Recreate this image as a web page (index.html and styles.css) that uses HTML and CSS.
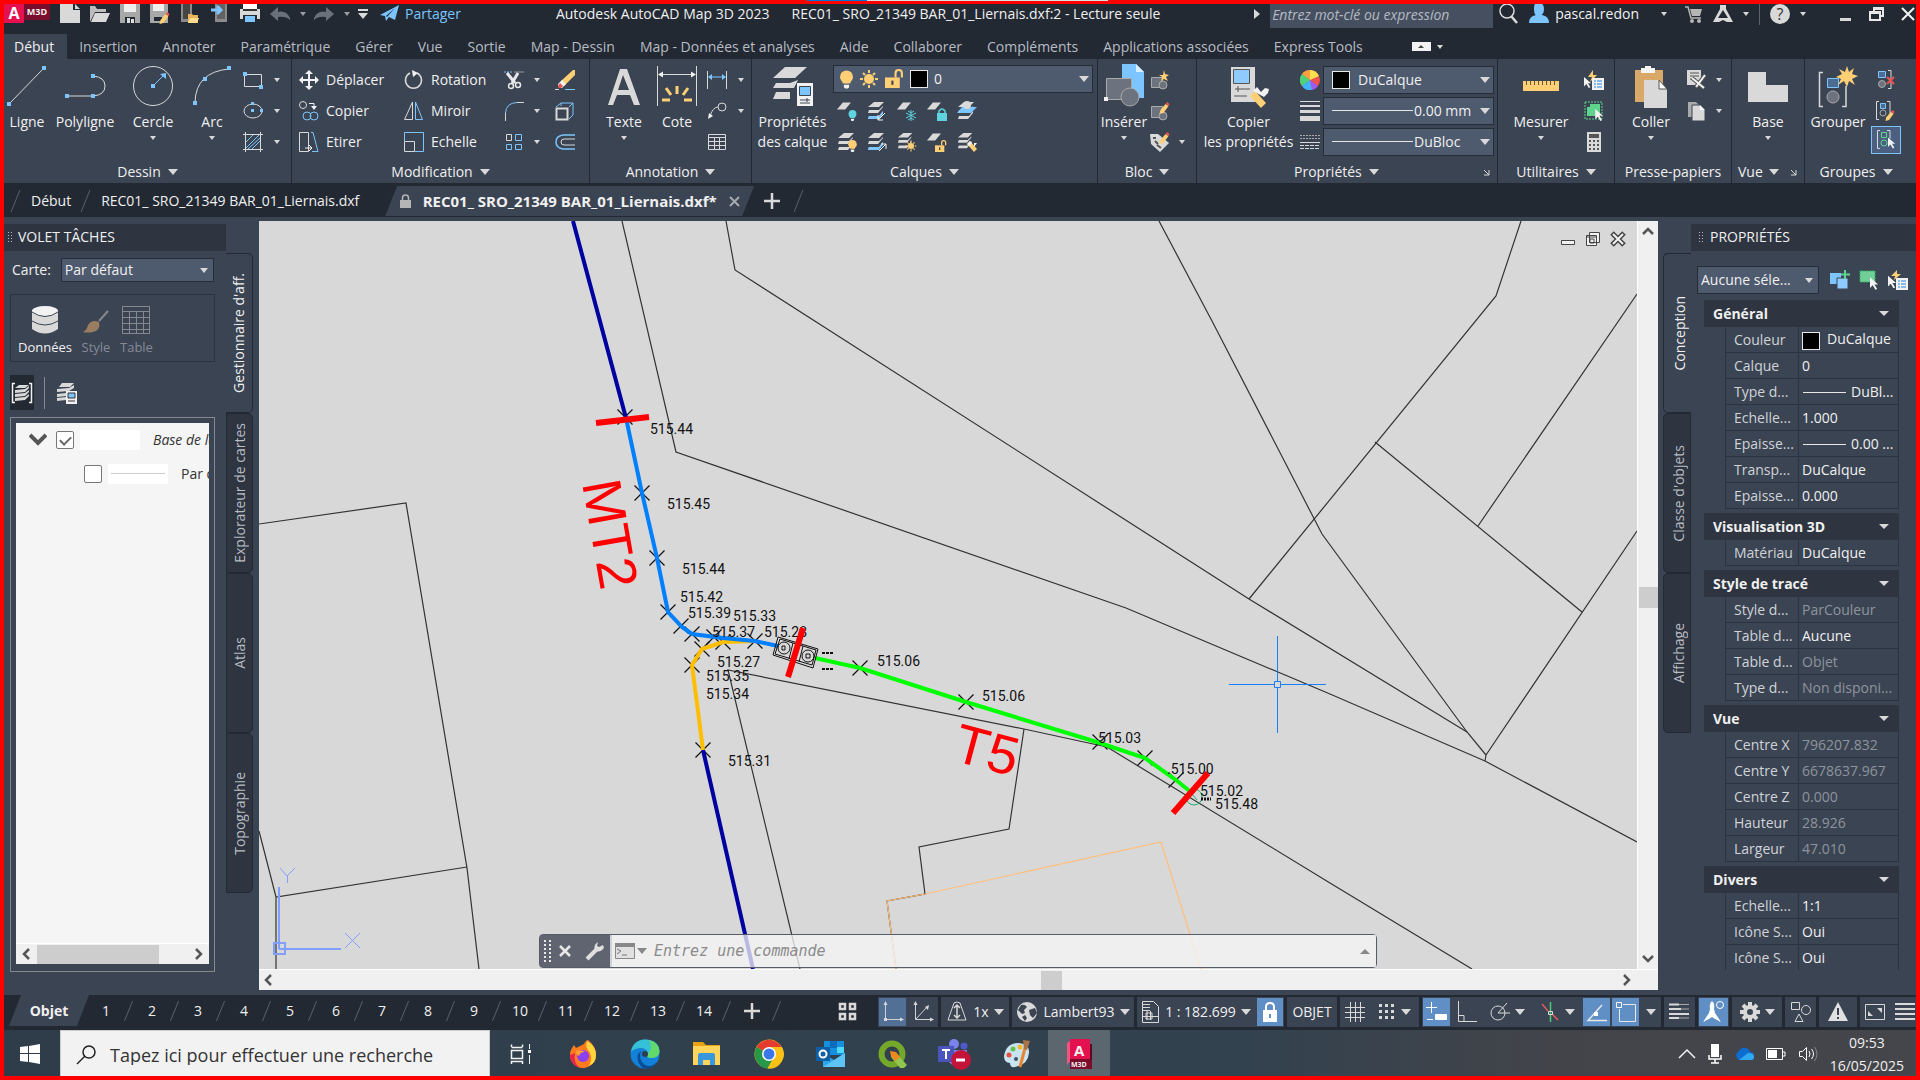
FILE: index.html
```html
<!DOCTYPE html>
<html lang="fr">
<head>
<meta charset="utf-8">
<title>Autodesk AutoCAD Map 3D 2023</title>
<link rel="stylesheet" href="styles.css">
</head>
<body>
<svg class="defs" aria-hidden="true">
  <symbol id="sheet" viewBox="0 0 12 6"><path d="M5 0h7L7 6H0z" fill="#d9d9d9"/></symbol>
  <symbol id="stack" viewBox="0 0 20 20"><path d="M7 1h10l-5 5H1z" fill="#d9d9d9"/><path d="M2 9h10l4-4v1l-5 6H1z" fill="#d9d9d9"/><path d="M2 15h10l4-5v2l-5 6H1z" fill="#d9d9d9"/></symbol>
  <symbol id="bulb" viewBox="0 0 10 14"><circle cx="5" cy="5" r="5"/><path d="M2 8h6v2H2z"/><path d="M3 11h4v2l-1 1H4l-1-1z" fill="#f2f2f2"/></symbol>
  <symbol id="sun" viewBox="0 0 20 20"><circle cx="10" cy="10" r="5"/><path d="M10 1v3M10 16v3M1 10h3M16 10h3M4 4l2 2M14 14l2 2M16 4l-2 2M4 16l2-2" stroke="#ffcf75" stroke-width="2"/></symbol>
  <symbol id="unlock" viewBox="0 0 18 18"><path d="M0 8h14v10H0z"/><path d="M10 8V4q0-3 3-3t3 3v4" fill="none" stroke="#ffcf75" stroke-width="2"/><path d="M7 11v4" stroke="#3b4453" stroke-width="2"/></symbol>
  <symbol id="pencil" viewBox="0 0 10 12"><path d="M0 12l1-4 5-6 3 2-5 7z" fill="#ffcf75"/><path d="M6 2l2-2 2 2-1 2z" fill="#e8554d"/></symbol>
  <symbol id="cursor" viewBox="0 0 10 14"><path d="M0 0l9 8H5l3 5-2 1-3-5-3 3z" fill="#f2f2f2"/></symbol>
  <symbol id="mark" viewBox="-8 -8 16 16"><path d="M-7.500-7.500l15 15M7.500-7.500l-15 15" stroke="#111" stroke-width="1.200"/></symbol>
</svg>

<div class="app">
  <header class="titlebar">
    <button class="brand" aria-label="Menu application"><b>A</b><span>M3D</span></button>
    <div class="quick">
      <button aria-label="Nouveau"><svg width="20" height="20"><path d="M0 0h13v6h7v13H0z" fill="#d9d9d9"/><path d="M15 0l5 5h-5z" fill="#d9d9d9"/></svg></button>
      <button aria-label="Ouvrir"><svg width="20" height="20"><path d="M0 18V2h5l2 3h9v3H5z" fill="#bdbdbd"/><path d="M5 9h15l-4 9H1z" fill="#d9d9d9"/></svg></button>
      <button aria-label="Enregistrer"><svg width="20" height="20"><path d="M0 0h20v19H0z" fill="#a8a8a8"/><path d="M4 0h12v8H4z" fill="#eee"/><path d="M5 13h10v6H5z" fill="#222933"/><path d="M7 14h3v5H7zM11 15h3v4h-3z" fill="#ddd"/></svg></button>
      <button aria-label="Enregistrer sous"><svg width="20" height="20"><path d="M0 0h18v19H0z" fill="#a8a8a8"/><path d="M3 0h11v7H3z" fill="#eee"/><path d="M4 13h8v4H4z" fill="#222933"/><use href="#pencil" x="9" y="8" width="11" height="12"/></svg></button>
      <button aria-label="Ouvrir depuis mobile"><svg width="20" height="20"><path d="M1 0h11v18H1z" fill="#8b8b8b"/><path d="M3 0h7v15H3z" fill="#454545"/><path d="M8 10h4l1 1h5v8H8z" fill="#e9b559"/><path d="M10 14h9l-2 5H8z" fill="#ffdc8c"/></svg></button>
      <button aria-label="Enregistrer sur mobile"><svg width="20" height="20"><path d="M5 0h12v18H5z" fill="#8b8b8b"/><path d="M7 0h8v15H7z" fill="#626262"/><path d="M1 6h8M7 2l4 4-4 4" fill="none" stroke="#7cc5ff" stroke-width="3"/></svg></button>
      <button aria-label="Imprimer"><svg width="20" height="20"><path d="M3 0h14v5H3z" fill="#fff"/><path d="M0 5h20v10H0z" fill="#d9d9d9"/><path d="M3 5h14v2H3z" fill="#333"/><path d="M3 11h14v8H3z" fill="#222933"/><path d="M5 12h10v6H5z" fill="#7cc5ff"/></svg></button>
      <button aria-label="Annuler"><svg width="20" height="20"><path d="M8 3v5q8-2 12 6v2q-4-4-12-3v4L0 10z" fill="#6b717b"/></svg></button><i class="caret dim"></i>
      <button aria-label="Rétablir"><svg width="20" height="20"><path d="M12 3v5Q4 6 0 14v2q4-4 12-3v4l8-7z" fill="#6b717b"/></svg></button><i class="caret dim"></i>
      <button aria-label="Personnaliser" class="slim"><svg width="10" height="20"><path d="M0 5h10v2H0zM0 9h10l-5 6z" fill="#d9d9d9"/></svg></button>
      <button class="share"><svg width="20" height="20"><path d="M0 11L19 1l-4 15-6-3-3 4-1-5zM6 12l9-8-8 9z" fill="#7cc5ff" fill-rule="evenodd"/></svg>Partager</button>
    </div>
    <h1><span>Autodesk AutoCAD Map 3D 2023</span><span>REC01_ SRO_21349 BAR_01_Liernais.dxf:2 - Lecture seule</span></h1>
    <div class="account">
      <i class="play"></i>
      <input type="text" aria-label="Recherche" placeholder="Entrez mot-clé ou expression">
      <button aria-label="Rechercher"><svg width="20" height="22"><circle cx="8" cy="8" r="7" fill="none" stroke="#d9d9d9" stroke-width="1.500"/><path d="M12 13l6 7" stroke="#d9d9d9" stroke-width="2.500"/></svg></button>
      <button class="user"><svg width="20" height="22"><path d="M10 0q5 0 5 6t-5 7-5-7 5-6" fill="#7cc5ff"/><path d="M0 20q0-7 7-8h6q7 1 7 8z" fill="#7cc5ff"/></svg>pascal.redon</button>
      <i class="caret"></i>
      <button aria-label="Boutique"><svg width="18" height="20"><path d="M0 3h3l3 11h10" fill="none" stroke="#b5b5b5" stroke-width="1.500"/><path d="M5 5h12l-2 7H7z" fill="#b5b5b5"/><circle cx="7" cy="17" r="2" fill="#b5b5b5"/><circle cx="14" cy="17" r="2" fill="#b5b5b5"/></svg></button>
      <button aria-label="Autodesk"><svg width="20" height="20"><path d="M7 1h6v4l7 13h-6l-4-2-4 2H0L7 5zM10 6l-5 8h10z" fill="#d9d9d9" fill-rule="evenodd"/></svg></button>
      <i class="caret"></i>
      <i class="bar"></i>
      <button aria-label="Aide" class="help">?</button>
      <i class="caret"></i>
    </div>
    <div class="winctl">
      <button aria-label="Réduire"><svg width="16" height="16"><path d="M2 12h11v3H2z" fill="#d9d9d9"/></svg></button>
      <button aria-label="Restaurer"><svg width="16" height="16"><path d="M5 5V2h9v8h-3M1 6h10v8H1zM1 7h10M5 3h9" fill="none" stroke="#e8e8e8" stroke-width="2"/></svg></button>
      <button aria-label="Fermer"><svg width="16" height="16"><path d="M2 2l12 12M14 2L2 14" stroke="#f2f2f2" stroke-width="2"/></svg></button>
    </div>
  </header>

  <nav class="menu">
    <button class="on">Début</button><button>Insertion</button><button>Annoter</button><button>Paramétrique</button><button>Gérer</button><button>Vue</button><button>Sortie</button><button>Map - Dessin</button><button>Map - Données et analyses</button><button>Aide</button><button>Collaborer</button><button>Compléments</button><button>Applications associées</button><button>Express Tools</button>
    <button class="collapse" aria-label="Réduire le ruban"><svg width="19" height="9"><path d="M0 0h19v9H0z" fill="#f2f2f2"/><path d="M6 6l3-3 3 3z" fill="#444"/></svg><i class="caret"></i></button>
  </nav>

  <section class="ribbon">
    <div class="panel p-draw">
      <div class="tools">
        <button class="big"><svg width="40" height="44"><path d="M2 40L37 4" stroke="#d9d9d9"/><path d="M0 38h4v4H0zM35 2h4v4h-4z" fill="#7cc5ff"/></svg>Ligne</button>
        <button class="big poly"><svg width="44" height="44"><path d="M4 32h26q12-1 12-10T30 12" fill="none" stroke="#d9d9d9"/><path d="M2 30h4v4H2zM28 30h4v4h-4zM28 10h4v4h-4z" fill="#7cc5ff"/></svg>Polyligne</button>
        <button class="big"><svg width="42" height="44"><circle cx="21" cy="22" r="19.500" fill="none" stroke="#d9d9d9"/><path d="M21 22l12-12" stroke="#7cc5ff"/><path d="M34 9v6l-6-5zM19 20h4v4h-4z" fill="#7cc5ff"/></svg>Cercle<i class="caret"></i></button>
        <button class="big arc"><svg width="40" height="44"><path d="M3 38Q4 8 37 5" fill="none" stroke="#d9d9d9"/><path d="M1 37h4v4H1zM11 13h4v4h-4zM35 2h4v4h-4z" fill="#7cc5ff"/></svg>Arc<i class="caret"></i></button>
        <div class="small">
          <button aria-label="Rectangle"><svg width="20" height="20"><path d="M1.500 4.500h17v12h-17z" fill="none" stroke="#d9d9d9"/><path d="M0 2h4v4H0zM16 15h4v4h-4z" fill="#7cc5ff"/></svg><i class="caret"></i></button>
          <button aria-label="Ellipse"><svg width="20" height="20"><ellipse cx="10" cy="10" rx="9" ry="7" fill="none" stroke="#d9d9d9"/><path d="M8 8h3v3H8zM17 8h3v3h-3zM8 1h3v3H8z" fill="#7cc5ff"/></svg><i class="caret"></i></button>
          <button aria-label="Hachures"><svg width="20" height="20"><path d="M0 2.500h20M0 17.500h20M2.500 0v20M17.500 0v20" stroke="#d9d9d9"/><path d="M3 10l7-7M3 16L16 3M9 17l8-8M5 17l12-11" stroke="#7cc5ff"/></svg><i class="caret"></i></button>
        </div>
      </div>
      <h2>Dessin <i class="caret"></i></h2>
    </div>
    <div class="panel p-edit">
      <div class="tools editgrid">
        <button><svg width="20" height="20"><path d="M10 2v16M2 10h16" stroke="#f2f2f2" stroke-width="2"/><path d="M10 0l4 4H6zM10 20l4-4H6zM0 10l4-4v8zM20 10l-4-4v8z" fill="#f2f2f2"/></svg>Déplacer</button>
        <button><svg width="20" height="20"><path d="M13 3a8 8 0 1 1-7 0" fill="none" stroke="#d9d9d9" stroke-width="1.500"/><path d="M8 0l6 3-5 4z" fill="#f2f2f2"/></svg>Rotation</button>
        <button class="ico" aria-label="Ajuster"><svg width="20" height="20"><path d="M0 2h9" stroke="#7cc5ff" stroke-dasharray="2 1"/><path d="M10 2h10" stroke="#999"/><path d="M3 3l8 10M14 3L8 13" stroke="#e8e8e8" stroke-width="3"/><circle cx="7" cy="16" r="2.500" fill="none" stroke="#e8e8e8" stroke-width="1.500"/><circle cx="14" cy="15" r="2.500" fill="none" stroke="#e8e8e8" stroke-width="1.500"/></svg><i class="caret"></i></button>
        <button class="ico" aria-label="Effacer"><svg width="20" height="20"><path d="M6 11L18 0h2v5L9 16z" fill="#ffcf75"/><path d="M7 10l4 4-4 4H4l-1-4z" fill="#f2f2f2"/><path d="M5 13l3 3-2 2H4l-1-2z" fill="#e8554d"/><path d="M0 19.500h4" stroke="#d9d9d9"/><path d="M10 19.500h10" stroke="#7cc5ff"/></svg></button>
        <button><svg width="20" height="20"><circle cx="4" cy="4" r="3.500" fill="none" stroke="#d9d9d9"/><path d="M10 2.500h5v4" fill="none" stroke="#f2f2f2"/><path d="M12 5h6l-3 4z" fill="#f2f2f2"/><circle cx="8" cy="15" r="4" fill="none" stroke="#7cc5ff"/><circle cx="15" cy="15" r="4" fill="none" stroke="#7cc5ff"/></svg>Copier</button>
        <button><svg width="20" height="20"><path d="M8.500 1v17.500h-8z" fill="none" stroke="#d9d9d9"/><path d="M11.500 1v17.500h7z" fill="none" stroke="#7cc5ff"/></svg>Miroir</button>
        <button class="ico" aria-label="Raccord"><svg width="20" height="20"><path d="M1.500 20v-8" stroke="#d9d9d9"/><path d="M1.500 12Q2 2 13 1.500" fill="none" stroke="#7cc5ff"/><path d="M13 1.500h7" stroke="#d9d9d9"/></svg><i class="caret"></i></button>
        <button class="ico" aria-label="Décomposer"><svg width="20" height="20"><path d="M1.500 7.500h11v11h-11z" fill="none" stroke="#d9d9d9" stroke-width="2"/><path d="M1 6l5-4h12v12l-4 4M14 6l4-4M6 2v3" fill="none" stroke="#7cc5ff"/></svg></button>
        <button><svg width="20" height="20"><path d="M.5.5h9v19h-9z" fill="none" stroke="#d9d9d9"/><path d="M12 .5h2l5 19h-6" fill="none" stroke="#7cc5ff"/><path d="M6 16h7M10 13l3 3-3 3" fill="none" stroke="#f2f2f2"/></svg>Etirer</button>
        <button><svg width="20" height="20"><path d="M.5 9V.5h19v19H11" fill="none" stroke="#7cc5ff"/><path d="M.5 9.500h10v10H.5z" fill="none" stroke="#d9d9d9"/></svg>Echelle</button>
        <button class="ico" aria-label="Réseau"><svg width="20" height="20" fill="none"><path d="M2.500 2.500h5v6h-5z" stroke="#d9d9d9"/><path d="M11.500 2.500h6v6h-6zM2.500 12.500h5v5h-5zM11.500 12.500h6v5h-6z" stroke="#7cc5ff"/></svg><i class="caret"></i></button>
        <button class="ico" aria-label="Décaler"><svg width="20" height="20" fill="none"><path d="M20 3H8Q1 4 1 10t7 7h12" stroke="#7cc5ff" stroke-width="1.500"/><path d="M20 7H9q-3 0-3 3t3 3h11" stroke="#d9d9d9"/></svg></button>
      </div>
      <h2>Modification <i class="caret"></i></h2>
    </div>
    <div class="panel p-note">
      <div class="tools">
        <button class="big"><svg width="34" height="44"><path d="M13 5h7l13 36h-6l-4-10H10L6 41H1zM16 11l-5 15h11z" fill="#d9d9d9" fill-rule="evenodd"/></svg>Texte<i class="caret"></i></button>
        <button class="big"><svg width="42" height="44"><path d="M1.500 2v40M40.500 2v40M3 10.500h36" stroke="#d9d9d9"/><path d="M2 10.500l5-3v6zM40 10.500l-5-3v6z" fill="#f2f2f2"/><path d="M21 22v8M10 24l5 7M32 24l-5 7M6 36h8M28 36h8" stroke="#ffcf75" stroke-width="3"/></svg>Cote</button>
        <div class="small">
          <button aria-label="Linéaire"><svg width="20" height="20"><path d="M.5 1v18M19.500 1v18" stroke="#d9d9d9"/><path d="M2 7h16" stroke="#7cc5ff"/><path d="M1 7l4-3v6zM19 7l-4-3v6z" fill="#7cc5ff"/></svg><i class="caret"></i></button>
          <button aria-label="Repère"><svg width="20" height="20"><circle cx="15" cy="6" r="4" fill="none" stroke="#d9d9d9"/><path d="M11 6q-5 0-8 9" fill="none" stroke="#d9d9d9"/><path d="M1 18l1-6 4 3z" fill="#f2f2f2"/></svg><i class="caret"></i></button>
          <button aria-label="Table"><svg width="20" height="20"><path d="M1.500 2.500h17v15h-17zM1 5.500h18M1 9.500h18M1 13.500h18M7.500 6v12M12.500 6v12" fill="none" stroke="#d9d9d9"/></svg></button>
        </div>
      </div>
      <h2>Annotation <i class="caret"></i></h2>
    </div>
    <div class="panel p-layer">
      <div class="tools">
        <button class="big two"><svg width="40" height="44"><path d="M12 3h22L22 14H0zM3 19h14l8-3-4 8H0zM3 28h14v7H0z" fill="#d9d9d9"/><path d="M24 19h16v23H24z" fill="#f2f2f2"/><path d="M26.500 22.500h11v9h-11z" fill="#7cc5ff" stroke="#3b4453"/><path d="M27 36h10M27 39h10M34 34v4" stroke="#3b4453"/></svg>Propriétés<br>des calque</button>
        <div class="layers">
          <div class="combo"><svg width="13" height="20" fill="#ffcf75"><use href="#bulb" width="13" height="19" y="1"/></svg><svg width="20" height="20" fill="#ffcf75"><use href="#sun" width="20" height="20"/></svg><svg width="19" height="20" fill="#ffcf75"><use href="#unlock" width="19" height="19"/></svg><i class="swatch"></i><select aria-label="Calque"><option>0</option></select><i class="caret big-caret"></i></div>
          <div class="icons">
            <button aria-label="Calque inactif"><svg width="20" height="20"><use href="#sheet" width="14" height="8" y="1"/><use href="#bulb" x="11" y="9" width="9" height="11" fill="#5fd3e0"/></svg></button>
            <button aria-label="Isoler"><svg width="20" height="20"><use href="#stack" width="20" height="20"/><path d="M2 15h10l4-5v3l-4 5H1z" fill="#7cc5ff"/><path d="M11 19l7-7M11 14v5h5" fill="none" stroke="#f2f2f2"/></svg></button>
            <button aria-label="Geler"><svg width="20" height="20"><use href="#sheet" width="14" height="8" y="1"/><path d="M14 9v11M9 12l10 5M19 12L9 17M11 10l3 2 3-2M11 19l3-2 3 2" stroke="#5fd3e0" fill="none"/></svg></button>
            <button aria-label="Verrouiller"><svg width="20" height="20"><use href="#sheet" width="14" height="8" y="1"/><path d="M10 12h10v8H10z" fill="#5fd3e0"/><path d="M12 12v-2q3-4 6 0v2" fill="none" stroke="#5fd3e0" stroke-width="1.500"/></svg></button>
            <button aria-label="Rendre courant"><svg width="20" height="20"><use href="#stack" width="20" height="20"/><path d="M5 6h15l-6 6H0z" fill="#7cc5ff"/><circle cx="10" cy="4" r="4" fill="#d9d9d9"/></svg></button>
            <button aria-label="Activer tous"><svg width="20" height="20"><use href="#stack" width="20" height="20"/><use href="#bulb" x="11" y="8" width="9" height="12" fill="#ffcf75"/></svg></button>
            <button aria-label="Annuler isolement"><svg width="20" height="20"><use href="#stack" width="20" height="20"/><path d="M2 15h10l4-5v3l-4 5H1z" fill="#7cc5ff"/><path d="M12 19l7-7M14 12h5v5" fill="none" stroke="#f2f2f2"/></svg></button>
            <button aria-label="Libérer tous"><svg width="20" height="20" fill="#ffcf75"><use href="#stack" width="18" height="18"/><use href="#sun" x="8" y="8" width="12" height="12"/></svg></button>
            <button aria-label="Déverrouiller"><svg width="20" height="20" fill="#ffcf75"><use href="#sheet" width="14" height="8" y="1"/><use href="#unlock" x="8" y="8" width="12" height="12"/></svg></button>
            <button aria-label="Copier calque"><svg width="20" height="20"><use href="#stack" width="18" height="18"/><path d="M10 12l3-3 7 8-3 3z" fill="#ffcf75"/><path d="M10 12l3-3 2 2-3 3zM17 11l3 0-3 4z" fill="#f2f2f2"/></svg></button>
          </div>
        </div>
      </div>
      <h2>Calques <i class="caret"></i></h2>
    </div>
    <div class="panel p-block">
      <div class="tools">
        <button class="big"><svg width="40" height="44"><path d="M18 0h14l8 8v26H18z" fill="#7cc5ff"/><path d="M32 0v8h8z" fill="#d9efff"/><path d="M2.500 14.500h25v21h-25z" fill="#6c727e" stroke="#aaa"/><circle cx="26" cy="33" r="9" fill="#6c727e" stroke="#aaa"/><path d="M0 33h4v4H0z" fill="#f2f2f2"/></svg>Insérer<i class="caret"></i></button>
        <div class="small">
          <button aria-label="Créer un bloc"><svg width="20" height="20"><path d="M1.500 7.500h11v10h-11z" fill="#6c727e" stroke="#aaa"/><circle cx="13" cy="15" r="4" fill="#6c727e" stroke="#aaa"/><path d="M14 0l1 4 4 1-3 2 2 4-4-2-3 2 1-4-3-2h4z" fill="#ffcf75"/></svg></button>
          <button aria-label="Modifier un bloc"><svg width="20" height="20"><path d="M1.500 5.500h11v11h-11z" fill="#6c727e" stroke="#aaa"/><circle cx="13" cy="15" r="4" fill="#6c727e" stroke="#aaa"/><use href="#pencil" x="9" y="1" width="11" height="12"/></svg></button>
          <button aria-label="Attributs"><svg width="20" height="20"><path d="M0 2h8l11 9-9 9L1 12z" fill="#d9d9d9"/><path d="M3 6h3M5 9l3 3M7 13l4 3" stroke="#555" stroke-width="2"/><use href="#pencil" x="9" y="0" width="11" height="12"/></svg><i class="caret"></i></button>
        </div>
      </div>
      <h2>Bloc <i class="caret"></i></h2>
    </div>
    <div class="panel p-prop">
      <div class="tools">
        <button class="big two"><svg width="40" height="44"><path d="M2 3h24v35H2z" fill="#d9d9d9"/><path d="M4.500 5.500h16v14h-16z" fill="#8fcbff" stroke="#555"/><path d="M6 25h15M9 22v6M5 32h13" stroke="#555"/><path d="M21 32l5-5 11 12-5 5z" fill="#ffcf75"/><path d="M24 27l4-4 4 5 4-4 4 1-1 4-4 4z" fill="#f2f2f2"/></svg>Copier<br>les propriétés</button>
        <div class="plist">
          <svg width="20" height="20"><circle cx="10" cy="10" r="10" fill="#ef5350"/><path d="M10 10L2 4a10 10 0 0 1 8-4z" fill="#ff9f40"/><path d="M10 10V0a10 10 0 0 1 9 6z" fill="#ffe14d"/><path d="M10 10L2 4a10 10 0 0 0 0 12z" fill="#4dd47a"/><path d="M10 10l-8 6a10 10 0 0 0 10 4z" fill="#3fb4ff"/><path d="M10 10l2 10a10 10 0 0 0 6-4z" fill="#9a5cf5"/></svg>
          <div class="combo"><i class="swatch"></i><select aria-label="Couleur"><option>DuCalque</option></select><i class="caret big-caret"></i></div>
          <svg width="20" height="20"><path d="M0 0h20v1H0zM0 4h20v2H0zM0 9h20v3H0zM0 15h20v5H0z" fill="#d9d9d9"/></svg>
          <div class="combo"><i class="rule"></i><select aria-label="Epaisseur de ligne"><option>0.00 mm</option></select><i class="caret big-caret"></i></div>
          <svg width="20" height="20"><path d="M0 3.500h20M0 6.500h20" stroke="#aaa" stroke-dasharray="2 1"/><path d="M0 10.500h20" stroke="#d9d9d9"/><path d="M0 13.500h20M0 16.500h20" stroke="#d9d9d9" stroke-dasharray="4 1"/></svg>
          <div class="combo"><i class="rule"></i><select aria-label="Type de ligne"><option>DuBloc</option></select><i class="caret big-caret"></i></div>
        </div>
      </div>
      <h2>Propriétés <i class="caret"></i><svg class="launch" width="7" height="7"><path d="M1 1l5 5M6 1v5H1" fill="none" stroke="#d9d9d9"/></svg></h2>
    </div>
    <div class="panel p-util">
      <div class="tools">
        <button class="big"><svg width="36" height="44"><path d="M0 17h36v10H0z" fill="#ffcf75"/><path d="M3.500 17v4M7.500 17v4M11.500 17v4M15.500 17v4M19.500 17v4M23.500 17v4M27.500 17v4M31.500 17v4" stroke="#6b5a35"/></svg>Mesurer<i class="caret"></i></button>
        <div class="small">
          <button aria-label="Sélection rapide"><svg width="20" height="20"><path d="M9 0L4 7h4l-2 5 7-7H9z" fill="#ffcf75"/><use href="#cursor" x="0" y="6" width="8" height="13"/><path d="M8 8h12v12H8z" fill="#f2f2f2"/><path d="M10 11h2M10 14h2M10 17h2M13 11h5M13 14h5M13 17h5" stroke="#1e82e0"/></svg></button>
          <button aria-label="Tout sélectionner"><svg width="20" height="20"><path d="M1 1h17v17H1z" fill="none" stroke="#5fd38c" stroke-dasharray="2 1"/><path d="M3 6h9v9H3zM6 3h10v10H6z" fill="#5fd38c"/><use href="#cursor" x="11" y="8" width="9" height="12"/></svg></button>
          <button aria-label="Calculatrice"><svg width="20" height="20"><path d="M3 0h14v20H3z" fill="#d9d9d9"/><path d="M5 2h10v4H5zM5 8h2v2H5zM9 8h2v2H9zM13 8h2v2h-2zM5 12h2v2H5zM9 12h2v2H9zM13 12h2v2h-2zM5 16h2v2H5zM9 16h2v2H9zM13 16h2v2h-2z" fill="#555"/></svg></button>
        </div>
      </div>
      <h2>Utilitaires <i class="caret"></i></h2>
    </div>
    <div class="panel p-clip">
      <div class="tools">
        <button class="big"><svg width="34" height="44"><path d="M1 6h28v32H1z" fill="#d9a96a"/><path d="M7 4h4V2h6v2h4v5H7z" fill="#f5f5f5"/><path d="M10 16h15l8 9v19H10z" fill="#d9d9d9"/><path d="M25 16v9h8z" fill="#fff" stroke="#555"/></svg>Coller<i class="caret"></i></button>
        <div class="small">
          <button aria-label="Couper"><svg width="20" height="20"><path d="M0 0h14v15H0z" fill="#d9d9d9"/><path d="M3 3h9M3 6h9M3 9h6" stroke="#555"/><path d="M5 8l12 10M18 5L9 17" stroke="#555" stroke-width="4"/><path d="M5 8l12 10M18 5L9 17" stroke="#f2f2f2" stroke-width="2"/></svg><i class="caret"></i></button>
          <button aria-label="Copier"><svg width="20" height="20"><path d="M1 1h8l3 3v12H1z" fill="#aaa"/><path d="M5 4h8l5 5v11H5z" fill="#d9d9d9" stroke="#3b4453"/><path d="M13 4v5h5z" fill="#fff"/></svg><i class="caret"></i></button>
        </div>
      </div>
      <h2>Presse-papiers</h2>
    </div>
    <div class="panel p-view">
      <div class="tools"><button class="big"><svg width="40" height="44"><path d="M0 8h18v13h22v17H0z" fill="#d9d9d9"/></svg>Base<i class="caret"></i></button></div>
      <h2>Vue <i class="caret"></i><svg class="launch" width="7" height="7"><path d="M1 1l5 5M6 1v5H1" fill="none" stroke="#d9d9d9"/></svg></h2>
    </div>
    <div class="panel p-group">
      <div class="tools">
        <button class="big"><svg width="40" height="44"><path d="M5 8.500H1.500v34H5M24 42.500h4V22" fill="none" stroke="#d9d9d9" stroke-width="1.500"/><path d="M9.500 14.500h11v9h-11z" fill="#4b6d94" stroke="#7cc5ff"/><circle cx="15" cy="33" r="6" fill="#6c727e" stroke="#aaa"/><path d="M29 2l2 6 5-4-2 6 6 2-6 3 3 6-6-4-2 6-3-6-6 4 3-6-5-2 6-3-3-5 6 3z" fill="#ffcf75"/></svg>Grouper</button>
        <div class="small">
          <button aria-label="Dissocier"><svg width="20" height="20"><path d="M2.500 1.500h7v6h-7z" fill="#4b6d94" stroke="#7cc5ff"/><circle cx="6" cy="14" r="3.500" fill="#6c727e" stroke="#aaa"/><path d="M12 .500h3v18h-3" fill="none" stroke="#d9d9d9"/><path d="M11 7l7 7M18 7l-7 7" stroke="#ef5350" stroke-width="2"/></svg></button>
          <button aria-label="Modifier le groupe"><svg width="20" height="20"><path d="M3 .500H.500v18H3M11 .500h3v12" fill="none" stroke="#d9d9d9"/><path d="M4.500 2.500h5v5h-5z" fill="#4b6d94" stroke="#7cc5ff"/><circle cx="7" cy="12" r="3" fill="none" stroke="#aaa"/><use href="#pencil" x="9" y="9" width="10" height="11"/></svg></button>
          <button class="active" aria-label="Sélection de groupe"><svg width="20" height="20"><path d="M4 .500H1.500v18H4M11 .500h3v8" fill="none" stroke="#d9d9d9"/><path d="M5.500 2.500h5v5h-5z" fill="none" stroke="#5fd38c"/><circle cx="8" cy="13" r="3" fill="none" stroke="#5fd38c"/><use href="#cursor" x="12" y="7" width="8" height="12"/></svg></button>
        </div>
      </div>
      <h2>Groupes <i class="caret"></i></h2>
    </div>
  </section>

  <nav class="files">
    <i class="slash"></i><button>Début</button><i class="slash"></i><button class="doc">REC01_ SRO_21349 BAR_01_Liernais.dxf</button>
    <button class="current"><svg width="11" height="14"><path d="M0 6h11v8H0z" fill="#b5b5b5"/><path d="M2.500 6V4q0-3 3-3t3 3v2" fill="none" stroke="#b5b5b5" stroke-width="1.500"/></svg>REC01_ SRO_21349 BAR_01_Liernais.dxf*<svg width="11" height="11"><path d="M1 1l9 9M10 1l-9 9" stroke="#a5a9b0" stroke-width="2"/></svg></button>
    <button aria-label="Nouvel onglet"><svg width="16" height="16"><path d="M8 0v16M0 8h16" stroke="#d9d9d9" stroke-width="2.500"/></svg></button><i class="slash"></i>
  </nav>

  <main class="work">
    <aside class="tasks">
      <h3 class="grip">VOLET TÂCHES</h3>
      <div class="taskbody">
        <div class="carte"><label for="map">Carte:</label><div class="combo"><select id="map"><option>Par défaut</option></select><i class="caret"></i></div></div>
        <div class="datatools">
          <button><svg width="30" height="30"><path d="M2 5v19q13 9 26 0V5z" fill="#d9d9d9"/><ellipse cx="15" cy="6" rx="13" ry="5" fill="#f2f2f2"/><path d="M2 7q13 9 26 0M2 16q13 8 26 0" fill="none" stroke="#3b4453"/></svg>Données</button>
          <button disabled><svg width="30" height="30"><path d="M2 27q4-2 5-7 4-6 11-3 2 8-6 10-5 1-10 0z" fill="#9a7d60"/><path d="M18 16l9-10" stroke="#85898f" stroke-width="2"/></svg>Style</button>
          <button disabled><svg width="30" height="30"><path d="M1.500 1.500h27v27h-27zM1 6.500h28M1 12.500h28M1 18.500h28M1 24.500h28M8.500 7v21M15.500 7v21M22.500 7v21" fill="none" stroke="#85898f"/></svg>Table</button>
        </div>
        <div class="viewmode">
          <button class="on" aria-label="Affichage par groupes"><svg width="22" height="22"><path d="M4 1.500H1.500v19H4M18 1.500h2.500v19H18" fill="none" stroke="#f2f2f2" stroke-width="1.500"/><path d="M8 3h10l-4 3H4zM4 8l10-1 4-3v2l-4 4-10 1zM4 12l10-1 4-3v2l-4 4-10 1zM4 16l10-1 4-3v2l-4 4-10 1z" fill="#d9d9d9"/></svg></button>
          <i class="bar"></i>
          <button aria-label="Affichage par ordre"><svg width="22" height="22"><path d="M6 1h12l-4 4H3zM1 7l12-1 5-3v3l-5 3-12 1zM1 12l9-1v3l-9 1zM1 16l9-1v3l-9 1z" fill="#d9d9d9"/><path d="M10 9h11v13H10z" fill="#f2f2f2"/><path d="M12 11h7v5h-7z" fill="#7cc5ff" stroke="#333"/><path d="M12 19h7" stroke="#333"/></svg></button>
        </div>
        <div class="treebox">
          <div class="tree">
            <div class="node top"><svg width="18" height="14"><path d="M1 2l8 8 8-8" fill="none" stroke="#555" stroke-width="4"/></svg><input type="checkbox" id="n1" checked><i class="chip wide"></i><label for="n1"><em>Base de la carte</em></label></div>
            <div class="node child"><input type="checkbox" id="n2"><i class="chip lined"></i><label for="n2">Par défaut</label></div>
            <div class="hscroll"><svg width="9" height="12"><path d="M7 1L2 6l5 5" fill="none" stroke="#555" stroke-width="2.500"/></svg><i class="thumb long"></i><svg width="9" height="12"><path d="M2 1l5 5-5 5" fill="none" stroke="#555" stroke-width="2.500"/></svg></div>
          </div>
        </div>
      </div>
    </aside>
    <nav class="vtabs left"><button class="on"><span>Gestionnaire d'aff.</span></button><button><span>Explorateur de cartes</span></button><button><span>Atlas</span></button><button><span>Topographie</span></button></nav>

    <section class="viewport">
      <div class="canvas">
        <svg class="drawing" viewBox="259 221 1378 748" preserveAspectRatio="xMinYMin slice">
          <g fill="none" stroke="#333" stroke-width="1.200">
            <path d="M622 221L676 452L1126 608L1330 694L1485 761L1637 842"/>
            <path d="M726 221L735 270L1249 599L1467 732"/>
            <path d="M1159 221L1212 321L1322 534L1467 732L1486 755L1485 761"/>
            <path d="M1521 221L1496 296L1249 599"/>
            <path d="M1637 294L1478 526M1375 442L1582 612M1637 531L1486 755"/>
            <path d="M259 524L406 503L467 868L479 969"/>
            <path d="M259 831L276 897L467 867M276 897V969"/>
            <path d="M800 969L728 670L1024 729L1107 747L1330 883L1472 969"/>
            <path d="M1024 729L1009 829L919 847L925 894L887 901L896 969"/>
          </g>
          <path d="M896 969L887 901L925 894L1161 842L1201 969" fill="none" stroke="#ffbf7a" stroke-width="1.200"/>
          <g>
            <use href="#mark" x="617" y="409" width="16" height="16"/><use href="#mark" x="634" y="485" width="16" height="16"/><use href="#mark" x="649" y="550" width="16" height="16"/><use href="#mark" x="660" y="604" width="16" height="16"/><use href="#mark" x="673" y="618" width="16" height="16"/><use href="#mark" x="684" y="626" width="16" height="16"/><use href="#mark" x="706" y="629" width="16" height="16"/><use href="#mark" x="715" y="634" width="16" height="16"/><use href="#mark" x="694" y="641" width="16" height="16"/><use href="#mark" x="684" y="657" width="16" height="16"/><use href="#mark" x="747" y="633" width="16" height="16"/><use href="#mark" x="695" y="742" width="16" height="16"/><use href="#mark" x="852" y="660" width="16" height="16"/><use href="#mark" x="958" y="694" width="16" height="16"/><use href="#mark" x="1092" y="734" width="16" height="16"/><use href="#mark" x="1137" y="750" width="16" height="16"/><use href="#mark" x="1168" y="772" width="16" height="16"/>
          </g>
          <g fill="none" stroke-width="4">
            <path d="M573 221L626 418" stroke="#0000a0"/>
            <path d="M703 750L753 969" stroke="#0000a0"/>
            <path d="M755 641L723 642L702 649L692 665L703 750" stroke="#ffbf00"/>
            <path d="M626 418L642 493L657 558L668 612L682 627L692 634L723 638L755 641L778 646" stroke="#007fff"/>
            <path d="M815 658L860 668L966 702L1100 743L1145 758L1176 780L1192 793" stroke="#0f0"/>
          </g>
          <g fill="none" stroke="#111">
            <path d="M778 637L818 649L813 668L773 655z"/><path d="M780 639L816 650L812 665L775 654z"/><path d="M793 643L789 659M803 646L799 662"/>
            <circle cx="784" cy="648" r="6"/><circle cx="808" cy="656" r="6"/><path d="M782 646h3v4h-3zM806 654h4v4h-4z"/>
            <path d="M822 653h11M822 669h11" stroke-width="2" stroke-dasharray="3 1"/>
            <circle cx="1194" cy="797" r="8" stroke="#1db06a"/><path d="M1192 794l5 6" stroke="#1db06a"/><path d="M1201 799h10" stroke-width="3" stroke-dasharray="2 1"/>
          </g>
          <g class="alt">
            <text x="650" y="434">515.44</text><text x="667" y="509">515.45</text><text x="682" y="574">515.44</text><text x="680" y="602">515.42</text><text x="688" y="618">515.39</text><text x="733" y="621">515.33</text><text x="712" y="637">515.37</text><text x="764" y="637">515.28</text><text x="717" y="667">515.27</text><text x="706" y="681">515.35</text><text x="706" y="699">515.34</text><text x="728" y="766">515.31</text><text x="877" y="666">515.06</text><text x="982" y="701">515.06</text><text x="1098" y="743">515.03</text><text x="1167" y="774">.515.00</text><text x="1200" y="796">515.02</text><text x="1215" y="809">515.48</text>
          </g>
          <path d="M596 423L649 417M803 628L788 677M1208 773L1173 813" stroke="#f00" stroke-width="6"/>
          <g class="tag"><text transform="translate(582 483) rotate(80)">MT2</text><text transform="translate(951 760) rotate(15)">T5</text></g>
          <g fill="none" stroke="#1a80f5"><path d="M1229 684.500h45M1281 684.500h45M1277.500 636v45M1277.500 688v45M1274.500 681.500h6v6h-6z"/></g>
          <g fill="none" stroke="#809fff" stroke-width="2"><path d="M274 943h11v11h-11zM279 887v62M279 949h62"/><path d="M280 868l7 8 8-8M287.500 876v7M345 933l15 15M360 933l-15 15" stroke-width="1"/></g>
        </svg>
        <div class="docctl">
          <button aria-label="Réduire"><svg width="16" height="16"><path d="M1.500 9.500h13v4h-13z" fill="#f2f2f2" stroke="#444"/></svg></button>
          <button aria-label="Restaurer"><svg width="16" height="16"><path d="M4.500 1.500h10v10h-10zM1.500 4.500h10v10h-10z" fill="#f2f2f2" stroke="#444"/><path d="M2 6h9M5 8h4v4H5z" fill="none" stroke="#444"/></svg></button>
          <button aria-label="Fermer"><svg width="16" height="16"><path d="M2 2l12 12M14 2L2 14" stroke="#444" stroke-width="5"/><path d="M3 3l10 10M13 3L3 13" stroke="#f2f2f2" stroke-width="2"/></svg></button>
        </div>
        <div class="command">
          <svg width="8" height="24"><path d="M1 1v22M6 1v22" stroke="#e8e8e8" stroke-width="2" stroke-dasharray="2 2"/></svg>
          <button aria-label="Fermer"><svg width="14" height="14"><path d="M2 2l10 10M12 2L2 12" stroke="#e8e8e8" stroke-width="2.500"/></svg></button>
          <button aria-label="Personnaliser"><svg width="20" height="20"><path d="M2 18L12 8" stroke="#e0e0e0" stroke-width="4"/><path d="M13 1q-5 3-3 8 4 4 9-2l-1-3-4 2-2-1z" fill="#e0e0e0"/></svg></button>
          <div class="prompt"><svg width="20" height="16"><path d="M.500.500h19v15H.500z" fill="#e0e0e0" stroke="#888"/><path d="M0 0h20v4H0z" fill="#888"/><path d="M2 6l4 2-4 3M7 12h5" fill="none" stroke="#777"/></svg><i class="caret grey"></i><input type="text" aria-label="Commande" placeholder="Entrez une commande"><i class="up"></i></div>
        </div>
      </div>
      <div class="vscroll"><svg width="12" height="9"><path d="M1 7l5-5 5 5" fill="none" stroke="#555" stroke-width="2.500"/></svg><i class="vthumb"></i><svg width="12" height="9"><path d="M1 2l5 5 5-5" fill="none" stroke="#555" stroke-width="2.500"/></svg></div>
      <div class="hscroll main"><svg width="9" height="12"><path d="M7 1L2 6l5 5" fill="none" stroke="#555" stroke-width="2.500"/></svg><i class="thumb short"></i><svg width="9" height="12"><path d="M2 1l5 5-5 5" fill="none" stroke="#555" stroke-width="2.500"/></svg></div>
    </section>

    <nav class="vtabs right"><button class="on"><span>Conception</span></button><button><span>Classe d'objets</span></button><button><span>Affichage</span></button></nav>
    <aside class="props">
      <h3 class="grip">PROPRIÉTÉS</h3>
      <div class="selrow">
        <div class="combo"><select aria-label="Sélection"><option>Aucune séle...</option></select><i class="caret"></i></div>
        <button aria-label="Ajout"><svg width="20" height="20"><path d="M0 3h11v11H0z" fill="#7cc5ff"/><path d="M7 8h11v11H7z" fill="#8fcbff" stroke="#3b4453"/><path d="M15 0v9M11 4.500h9" stroke="#5fd38c" stroke-width="2"/></svg></button>
        <button aria-label="Choix"><svg width="20" height="20"><path d="M1 1h15v11H1z" fill="#6fcf97" stroke="#35b06a" stroke-dasharray="2 1"/><use href="#cursor" x="11" y="7" width="9" height="13"/></svg></button>
        <button aria-label="Sélection rapide"><svg width="20" height="20"><path d="M9 0L3 6h4l-1 4 7-6H9z" fill="#ffcf75"/><use href="#cursor" x="0" y="5" width="9" height="14"/><path d="M8 8h12v12H8z" fill="#f2f2f2"/><path d="M10 11h2M10 14h2M10 17h2M13 11h5M13 14h5M13 17h5" stroke="#1e82e0"/></svg></button>
      </div>
      <div class="plists">
        <h4>Général<i class="caret"></i></h4>
        <table><tr><th>Couleur</th><td><i class="swatch"></i>DuCalque</td></tr><tr><th>Calque</th><td>0</td></tr><tr><th>Type d...</th><td><i class="line"></i>DuBl...</td></tr><tr><th>Echelle...</th><td>1.000</td></tr><tr><th>Epaisse...</th><td><i class="line"></i>0.00 ...</td></tr><tr><th>Transp...</th><td>DuCalque</td></tr><tr><th>Epaisse...</th><td>0.000</td></tr></table>
        <h4>Visualisation 3D<i class="caret"></i></h4>
        <table><tr><th>Matériau</th><td>DuCalque</td></tr></table>
        <h4>Style de tracé<i class="caret"></i></h4>
        <table><tr><th>Style d...</th><td class="ro">ParCouleur</td></tr><tr><th>Table d...</th><td>Aucune</td></tr><tr><th>Table d...</th><td class="ro">Objet</td></tr><tr><th>Type d...</th><td class="ro">Non disponi...</td></tr></table>
        <h4>Vue<i class="caret"></i></h4>
        <table><tr><th>Centre X</th><td class="ro">796207.832</td></tr><tr><th>Centre Y</th><td class="ro">6678637.967</td></tr><tr><th>Centre Z</th><td class="ro">0.000</td></tr><tr><th>Hauteur</th><td class="ro">28.926</td></tr><tr><th>Largeur</th><td class="ro">47.010</td></tr></table>
        <h4>Divers<i class="caret"></i></h4>
        <table><tr><th>Echelle...</th><td>1:1</td></tr><tr><th>Icône S...</th><td>Oui</td></tr><tr><th>Icône S...</th><td>Oui</td></tr></table>
      </div>
    </aside>
  </main>

  <footer class="status">
    <nav class="layouts">
      <button class="current">Objet</button><button>1</button><button>2</button><button>3</button><button>4</button><button>5</button><button>6</button><button>7</button><button>8</button><button>9</button><button>10</button><button>11</button><button>12</button><button>13</button><button>14</button><button class="add" aria-label="Nouvelle présentation"><svg width="16" height="16"><path d="M8 0v16M0 8h16" stroke="#d9d9d9" stroke-width="2.500"/></svg></button>
    </nav>
    <div class="toggles">
      <button class="bare" aria-label="Présentations"><svg width="20" height="20" fill="none" stroke="#d9d9d9" stroke-width="2.500"><path d="M2 2h5v5H2zM12 2h5v5h-5zM2 12h5v5H2zM12 12h5v5h-5z"/></svg></button>
      <div class="set"><button class="w29 blue dull" aria-label="SCU"><svg width="22" height="22"><path d="M3.500 2v16.500H20" fill="none" stroke="#cfd3d8"/><path d="M3.500 0l2 4h-4zM22 18.500l-4-2v4zM2 17h3v3H2z" fill="#d9d9d9"/></svg></button><button class="w31" aria-label="SCU objet"><svg width="22" height="22"><path d="M3.500 2v16.500H20M4 18L15 6" fill="none" stroke="#cfd3d8"/><path d="M3.500 0l2 4h-4zM22 18.500l-4-2v4zM17 4l-1 5-3-3z" fill="#d9d9d9"/></svg></button></div>
      <div class="set"><button class="w68"><svg width="22" height="22"><path d="M2 19L8 2q3-2 6 0l6 17z" fill="none" stroke="#d9d9d9"/><path d="M11 5v12M8 7l3-3 3 3M8 14l3 3 3-3" fill="none" stroke="#d9d9d9" stroke-width="1.500"/></svg>1x<i class="caret big-caret"></i></button></div>
      <div class="set"><button class="w122"><svg width="22" height="22"><circle cx="11" cy="11" r="10" fill="#d9d9d9"/><path d="M5 4q4-1 6 2l-3 3 1 3-3 1-4-4zM13 9l6-2 2 5-4 5-3-3zM9 14l2 3-2 3-3-4z" fill="#3b4453"/></svg>Lambert93<i class="caret big-caret"></i></button></div>
      <div class="set"><button class="w119"><svg width="18" height="22"><path d="M.5.5h11l5 5v16H.5z" fill="none" stroke="#d9d9d9"/><path d="M1 3.500h7M1 6.500h7M1 9.500h7M5 10v9M8.500 10v9M1 15.500h15M4 12h6v6H4z" fill="none" stroke="#d9d9d9"/></svg>1 : 182.699<i class="caret big-caret"></i></button><button class="w28 blue" aria-label="Verrouiller"><svg width="16" height="20"><path d="M1 8h14v12H1z" fill="#fff"/><path d="M4 8V5q0-4 4-4t4 4v3" fill="none" stroke="#fff" stroke-width="2"/><path d="M8 12v4" stroke="#5f8fc4" stroke-width="2"/></svg></button></div>
      <div class="set"><button class="w50">OBJET</button></div>
      <div class="set"><button class="w29" aria-label="Grille"><svg width="20" height="20"><path d="M5.500 0v20M10.500 0v20M15.500 0v20M0 5.500h20M0 10.500h20M0 15.500h20" stroke="#d9d9d9"/></svg></button><button class="w50" aria-label="Résolution"><svg width="18" height="18" fill="#d9d9d9"><path d="M1 1h3v3H1zM7 1h3v3H7zM13 1h3v3h-3zM1 7h3v3H1zM7 7h3v3H7zM13 7h3v3h-3zM1 13h3v3H1zM7 13h3v3H7zM13 13h3v3h-3z"/></svg><i class="caret big-caret"></i></button></div>
      <div class="set"><button class="w29 blue" aria-label="Saisie dynamique"><svg width="22" height="20"><path d="M5.500 0v11M0 5.500h11M1 17.500h6" stroke="#fff"/><path d="M9.500 12.500h11v5h-11z" fill="#fff" stroke="#fff"/></svg></button><button class="w31" aria-label="Ortho"><svg width="20" height="22"><path d="M1.500 0v20.500H20M2 14.500h5v6" fill="none" stroke="#d9d9d9"/></svg></button><button class="w50" aria-label="Polaire"><svg width="20" height="20"><circle cx="8" cy="11" r="7" fill="none" stroke="#d9d9d9"/><path d="M8 11h12M8 11l9-10" stroke="#d9d9d9"/></svg><i class="caret big-caret"></i></button><button class="w50" aria-label="Isométrique"><svg width="20" height="20"><path d="M10.500 0v20" stroke="#4fc878" stroke-width="1.500"/><path d="M2 2l6 7M12 12l6 6" stroke="#e05a5a" stroke-width="1.500"/><path d="M8.500 9.500h4v3h-4z" fill="none" stroke="#d9d9d9"/></svg><i class="caret big-caret"></i></button><button class="w29 blue" aria-label="Repérage"><svg width="22" height="20"><path d="M21 18.500H2L16 3" fill="none" stroke="#e8e8e8" stroke-width="1.500"/><path d="M8 10h4v4H8z" fill="#fff"/></svg></button><button class="w29 blue" aria-label="Accrochage"><svg width="22" height="22"><path d="M4.500 8v12.500h16V3.500H8" fill="none" stroke="#e8e8e8"/><path d="M1.500 1.500h5v5h-5z" fill="none" stroke="#fff"/></svg></button><button class="w21" aria-label="Options"><i class="caret big-caret"></i></button></div>
      <div class="set"><button class="w31" aria-label="Epaisseurs"><svg width="22" height="20"><path d="M0 2.500h20M0 7h20M0 16h20" stroke="#aaa"/><path d="M0 2.500h10M0 7h12M0 12h20M0 16h10" stroke="#d9d9d9" stroke-width="2"/></svg></button></div>
      <div class="set"><button class="w31 blue" aria-label="Annotation"><svg width="22" height="22"><path d="M9 0q3 2 2 8l1 4 6 9-6-3-3-2-3 2-6 3 6-9 1-4q-1-6 2-8z" fill="#fff"/><circle cx="17" cy="4" r="3.500" fill="none" stroke="#fff"/></svg></button></div>
      <div class="set"><button class="w50" aria-label="Espace de travail"><svg width="20" height="20"><circle cx="10" cy="10" r="5" fill="none" stroke="#d9d9d9" stroke-width="4"/><path d="M10 0v4M10 16v4M0 10h4M16 10h4M3 3l3 3M14 14l3 3M17 3l-3 3M3 17l3-3" stroke="#d9d9d9" stroke-width="4"/></svg><i class="caret big-caret"></i></button></div>
      <div class="set"><button class="w31" aria-label="Isoler"><svg width="20" height="20" fill="none" stroke="#d9d9d9"><path d="M.5.5h8v7h-8zM8 12l4 7.500H4z"/><circle cx="15" cy="8" r="4.500"/></svg></button></div>
      <div class="set"><button class="w38" aria-label="Alertes"><svg width="20" height="20"><path d="M10 0l10 19H0z" fill="#e0e0e0"/><path d="M10 6v7M10 15v2" stroke="#3b4453" stroke-width="2"/></svg></button></div>
      <div class="set last"><button class="w29" aria-label="Plein écran"><svg width="20" height="16"><path d="M.500.500h19v15H.500z" fill="none" stroke="#d9d9d9"/><path d="M12 4h5v5zM8 12H3V7z" fill="#d9d9d9"/></svg></button><button class="w31" aria-label="Personnalisation"><svg width="20" height="18"><path d="M0 1h20M0 6h20M0 11h20M0 16h20" stroke="#d9d9d9" stroke-width="2"/></svg></button></div>
    </div>
  </footer>

  <div class="taskbar">
    <button class="start" aria-label="Démarrer"><svg width="20" height="20"><path d="M0 3l8-1v7H0zM9 2l11-2v9H9zM0 10h8v8l-8-1zM9 10h11v10L9 18z" fill="#fff"/></svg></button>
    <label class="search"><svg width="20" height="20"><circle cx="13" cy="7" r="6" fill="none" stroke="#222" stroke-width="1.500"/><path d="M9 11l-8 8" stroke="#222" stroke-width="1.500"/></svg><input type="text" aria-label="Recherche Windows" placeholder="Tapez ici pour effectuer une recherche"></label>
    <div class="apps">
      <button aria-label="Affichage des tâches"><svg width="22" height="20"><path d="M1.500 6.500h11v8h-11zM1.500 3V.500M1.500 3.500h11M12.500 3V.500M1.500 20v-2.500h11V20" fill="none" stroke="#f2f2f2" stroke-width="1.500"/><path d="M19.500 0v5M19.500 11v9" stroke="#f2f2f2"/><path d="M18 6h3v3h-3z" fill="#fff"/></svg></button>
      <button aria-label="Firefox"><svg width="30" height="30"><path d="M16 5q2-4 4-4 8 6 8 15A13 13 0 1 1 4 9l2-3 2 3q4-2 8-4z" fill="#ff7a1f"/><path d="M19 2q9 5 9 14 0 8-7 11 5-10-1-16-3-4-1-9z" fill="#ffd53d"/><circle cx="15" cy="17" r="6" fill="#8a3ff0"/><path d="M2 16q0 10 10 13Q5 24 7 14z" fill="#e8254f"/><path d="M8 12q5-2 9 1-5 0-6 4-3-1-3-5z" fill="#ffa02f"/></svg></button>
      <button aria-label="Edge"><svg width="30" height="30"><circle cx="15" cy="15" r="14.500" fill="#1381d8"/><path d="M1 13Q3 1 15 .500 29 1 29.500 12q0 7-8 7-5 0-4-3 1-6-6-7-7 0-10.500 4z" fill="#35c1d8"/><path d="M19 1q10 3 10.500 11 0 7-8 7-5 0-4-3 6-7 1.500-15z" fill="#63d969"/><path d="M11 12q-3 9 4 14 6 3 12-3-5 8-14 6Q6 24 8 15z" fill="#0a4c96"/><circle cx="15" cy="15" r="3" fill="#2f3e4a"/></svg></button>
      <button aria-label="Explorateur"><svg width="30" height="30"><path d="M1 3h10l3 3h14v6H1z" fill="#e8a410"/><path d="M1 7h27v19H1z" fill="#ffd55c"/><path d="M6 26V16q0-2 2-2h13q2 0 2 2v10h-5v-5h-7v5z" fill="#3a96dd"/></svg></button>
      <button aria-label="Chrome"><svg width="30" height="30"><circle cx="15" cy="15" r="14.500" fill="#fbc116"/><path d="M15 15L2.500 8a14.500 14.500 0 0 1 25 0z" fill="#e33b2e"/><path d="M15 15L2.500 8a14.500 14.500 0 0 0 11 21.500l6-11z" fill="#279847"/><path d="M15 8h13a14.500 14.500 0 0 1-14 21.500l7-11z" fill="#fbc116"/><circle cx="15" cy="15" r="7" fill="#fff"/><circle cx="15" cy="15" r="5.500" fill="#3b78e7"/></svg></button>
      <button aria-label="Outlook"><svg width="30" height="30"><path d="M8 2h20v14H8z" fill="#1490df"/><path d="M14 2h7v7h-7z" fill="#0f6cbd"/><path d="M21 8h7v6h-7z" fill="#50d9ff"/><path d="M7 14l11 7 11-7v14H7z" fill="#28a8ea"/><path d="M7 28l22-14v14z" fill="#5ec4f5"/><path d="M0 8h14v14H0z" fill="#0f5fa8"/><circle cx="7" cy="15" r="3.500" fill="none" stroke="#fff" stroke-width="2"/></svg></button>
      <button aria-label="QGIS"><svg width="30" height="30"><circle cx="14" cy="15" r="10.500" fill="none" stroke="#74a82b" stroke-width="6"/><path d="M14 14l4 0 11 12-3 3h-4L13 18z" fill="#91c54d"/><path d="M12 12l6 1 4 5-5 4-4-5z" fill="#ee8a1d"/></svg></button>
      <button aria-label="Teams"><svg width="34" height="32"><circle cx="16" cy="6" r="5" fill="#7b83eb"/><circle cx="26" cy="8" r="3.500" fill="#5059c9"/><path d="M9 12h20v8q-2 8-10 8-8-1-10-8z" fill="#7b83eb"/><path d="M0 8h16v16H0z" fill="#4b53bc"/><path d="M4 12h8M8 12v9" stroke="#fff" stroke-width="2"/><circle cx="23" cy="22" r="10" fill="#c4143a"/><path d="M18 22h9" stroke="#fff" stroke-width="3"/></svg></button>
      <button aria-label="Paint"><svg width="30" height="30"><path d="M2 17Q4 4 17 4q11 1 10 10-1 12-14 14-5 1-5-4-6 0-6-7z" fill="#c9e3f2"/><circle cx="7" cy="16" r="2.500" fill="#e34f3a"/><circle cx="11" cy="10" r="2.500" fill="#6cbf4a"/><circle cx="18" cy="8" r="2.500" fill="#f0b72f"/><circle cx="14" cy="20" r="2" fill="#40515e"/><path d="M18 28l5-19" stroke="#e8872f" stroke-width="3"/><path d="M21 1l7 1-3 9-3-1z" fill="#a87445"/></svg></button>
      <button class="running" aria-label="AutoCAD"><svg width="30" height="30"><path d="M3 4l5-3v19l-5 6z" fill="#f0547f"/><path d="M6 0h20v22H6z" fill="#e51050"/><path d="M6 20h22v10H6z" fill="#7a0c2c"/><path d="M26 5h2v16h-2z" fill="#5c0a22"/></svg><b>A</b><small>M3D</small></button>
    </div>
    <div class="tray">
      <button aria-label="Icônes masquées"><svg width="18" height="12"><path d="M1 10l8-8 8 8" fill="none" stroke="#f2f2f2" stroke-width="1.500"/></svg></button>
      <button aria-label="Micro"><svg width="14" height="20"><path d="M3 0h8v13H3z" fill="#fff"/><path d="M1 11v4h12v-4M7 15v4M3 19h8" fill="none" stroke="#fff" stroke-width="1.500"/></svg></button>
      <button aria-label="OneDrive"><svg width="20" height="14"><path d="M5 13a5 5 0 0 1 0-9 6 6 0 0 1 11 1 4 4 0 0 1 1 8z" fill="#0f6cd0"/><path d="M5 13l9-7q6 0 6 4 0 3-3 3z" fill="#31a8f0"/></svg></button>
      <button aria-label="Batterie"><svg width="20" height="12"><path d="M.500.500h16v11H.500zM17 4h2v4h-2" fill="none" stroke="#fff"/><path d="M2 2h9v8H2z" fill="#fff"/></svg></button>
      <button aria-label="Volume"><svg width="20" height="16"><path d="M1.500 5.500h3l4-4v13l-4-4h-3z" fill="none" stroke="#fff"/><path d="M11 5q2 3 0 6M13.500 3q4 5 0 10" fill="none" stroke="#fff"/><path d="M16.500 1q5 7 0 14" fill="none" stroke="#888"/></svg></button>
      <time>09:53<br>16/05/2025</time>
    </div>
  </div>
</div>
<div class="frame" aria-hidden="true"><i></i></div>
</body>
</html>
```
FILE: styles.css
```css
:root {
  --dark: #222933;
  --panel: #3b4453;
  --deep: #2e3440;
  --field: #4e5a6e;
  --text: #f0f0f0;
  --mute: #b8bcc3;
}
* { box-sizing: border-box; }
body { margin: 0; background: var(--dark); color: var(--text); font: 14px/20px "Open Sans", "Noto Sans", sans-serif; overflow: hidden; }
button, input, select { font: inherit; color: inherit; }
button { display: flex; align-items: center; justify-content: center; padding: 0; border: 0; background: none; white-space: nowrap; }
select { appearance: none; flex: 1; min-width: 0; border: 0; padding: 0; background: transparent; outline: 0; }
option { color: #000; }
svg { display: block; flex: none; }
i { flex: none; }
h1, h2, h3, h4 { margin: 0; font-weight: 400; font-size: 14px; }
.defs { position: absolute; width: 0; height: 0; }
.app { display: flex; flex-direction: column; height: 100vh; padding: 0 4px; }
.frame { position: fixed; inset: 0; border: 4px solid #f00; pointer-events: none; }
.frame i { position: absolute; top: -4px; left: 42%; width: 301px; height: 1px; background: linear-gradient(90deg, #0078d7 60px, #ddd 60px); }

.caret { width: 0; height: 0; border: 3px solid transparent; border-top: 4px solid #d9d9d9; border-bottom: 0; }
.big-caret { border-width: 5px; border-top-width: 6px; border-bottom: 0; }
.caret.dim { border-top-color: #9a9da3; }
.caret.grey { border-width: 5px; border-top: 6px solid #888; border-bottom: 0; }
.swatch { width: 18px; height: 18px; border: 1px solid #e8e8e8; background: #000; }
.combo { display: flex; align-items: center; gap: 8px; height: 28px; padding: 0 3px 0 8px; border: 1px solid #262d38; background: var(--field); }

/* Title bar */
.titlebar { display: flex; align-items: center; flex: none; height: 34px; padding-bottom: 6px; }
.brand { width: 46px; height: 28px; align-self: flex-start; padding-top: 4px; align-items: stretch; }
.brand b { width: 20px; height: 19px; background: #e51050; color: #fff; font-size: 16px; line-height: 18px; }
.brand span { width: 26px; height: 16px; background: #7a0c2c; font-size: 9px; font-weight: 700; line-height: 16px; }
.quick { display: flex; align-items: center; gap: 10px; margin-left: 10px; }
.quick .caret { margin-right: -2px; }
.share { gap: 5px; color: #7cc5ff; margin-left: 2px; }
h1 { display: flex; gap: 22px; margin: 0 auto 0 95px; white-space: nowrap; }
.account { display: flex; align-items: center; gap: 10px; }
.account input { width: 223px; height: 28px; padding: 2px; border: 0; background: #454f60; font-style: italic; }
.account input::placeholder { color: #b5bac2; opacity: 1; }
.account input + button { margin-left: -4px; }
.user { gap: 6px; }
.user + .caret { margin: 0 8px 0 12px; }
.play { border: 5px solid transparent; border-left: 6px solid #d9d9d9; border-right: 0; }
.bar { width: 1px; height: 22px; background: #5b626d; }
.help { width: 20px; height: 20px; border-radius: 10px; background: #d9d9d9; color: #333; font-size: 16px; }
.winctl { display: flex; gap: 15px; margin-left: 32px; }

/* Ribbon tabs */
.menu { display: flex; flex: none; height: 25px; }
.menu button { padding: 0 13px 0 12px; color: var(--mute); }
.menu button.on { padding-left: 10px; background: var(--panel); color: var(--text); }
.menu .collapse { gap: 6px; margin-left: 24px; }

/* Ribbon */
.ribbon { display: flex; flex: none; height: 124px; margin: 0 -4px; padding-left: 4px; background: var(--panel); }
.panel { display: flex; flex-direction: column; flex: none; border-right: 1px solid var(--dark); }
.tools { display: flex; flex: 1; padding-top: 5px; min-height: 0; }
.panel h2 { display: flex; align-items: center; justify-content: center; gap: 7px; height: 22px; }
.panel h2 .caret { border-width: 5px; border-top-width: 6px; border-bottom: 0; }
.launch { margin-left: auto; margin-right: 7px; }
.panel.p-prop h2 { padding-left: 97px; }
.panel.p-view h2 { padding-left: 6px; gap: 6px; }
.p-draw { width: 288px; }
.p-edit { width: 298px; }
.p-note { width: 162px; }
.p-layer { width: 346px; }
.p-block { width: 99px; }
.p-prop { width: 301px; }
.p-util { width: 117px; }
.p-clip { width: 117px; }
.p-view { width: 73px; }
.p-group { flex: 1; padding-right: 12px; }
.big { flex-direction: column; justify-content: flex-start; height: 93px; flex: none; }
.big svg { margin-bottom: 4px; }
.big .caret { margin-top: 4px; }
.big.two { line-height: 20px; }
.p-draw .big { width: 66px; }
.p-draw .big:first-child { width: 46px; }
.p-draw .poly { width: 70px; }
.p-draw .arc { width: 52px; }
.p-draw .small { margin-left: 5px; }
.p-note .big { width: 46px; }
.p-note .big:first-child { width: 60px; margin-left: 4px; }
.p-note .small { margin-left: 7px; }
.p-layer .big { width: 81px; }
.p-block .big { width: 52px; }
.p-prop .big { width: 103px; }
.p-util .big { width: 86px; }
.p-clip .big { width: 72px; }
.p-view .big { width: 72px; }
.p-group .big { width: 66px; }
.small { display: flex; flex-direction: column; }
.small button { height: 31px; gap: 11px; justify-content: flex-start; }
.p-clip .small button, .p-block .small button { gap: 9px; }
.p-group .small button { width: 30px; justify-content: center; }
.p-group .small .active { height: 28px; border: 1px solid #7cc5ff; background: #4b6080; }
.editgrid { display: grid; grid-template-columns: 105px 100px 51px 20px; grid-auto-rows: 31px; padding-left: 7px; }
.editgrid button { justify-content: flex-start; gap: 7px; }
.editgrid .ico { gap: 10px; }
.layers { display: flex; flex-direction: column; flex: 1; padding: 1px 4px 0 0; }
.layers .combo { gap: 6px; padding-left: 6px; }
.icons { display: grid; grid-template-columns: repeat(5, 20px); grid-auto-rows: 31px; column-gap: 10px; padding: 2px 0 0 4px; }
.icons button { height: 31px; }
.plist { display: grid; grid-template-columns: 20px 1fr; grid-auto-rows: 31px; align-items: center; column-gap: 3px; flex: 1; padding-right: 4px; }
.rule { width: 81px; height: 1px; margin-right: -7px; background: #e8e8e8; }

/* Drawing tabs */
.files { display: flex; align-items: center; flex: none; height: 33px; padding: 2px 0 0 5px; }
.files button { height: 30px; }
.slash { width: 1px; height: 22px; margin: 0 15px 0 6px; background: #5b626d; transform: skewX(-22deg); }
.files .slash + button { margin-right: 8px; }
.files .current { gap: 12px; align-self: flex-end; width: 369px; margin: 0 10px 0 18px; background: var(--panel); clip-path: polygon(12px 0, 100% 0, calc(100% - 12px) 100%, 0 100%); font-size: 15px; font-weight: 700; }
.files .doc { width: 258px; }
.current + button + .slash { margin-left: 18px; }

/* Work area */
.work { display: grid; grid-template-columns: 222px 33px 1fr 33px 225px; flex: 1; min-height: 0; margin: 0 -4px; padding: 0 4px; background: var(--panel); border-top: 1px solid var(--dark); }
.grip { height: 27px; margin-top: 7px; padding-left: 14px; line-height: 25px; background: repeating-linear-gradient(#b5bac2 0 1px, transparent 1px 3px) 4px 8px / 1px 10px no-repeat, repeating-linear-gradient(#b5bac2 0 1px, transparent 1px 3px) 7px 8px / 1px 10px no-repeat, var(--deep); }
.props .grip { padding-left: 19px; background-position: 8px 8px, 11px 8px, 0 0; }
.tasks, .props { display: flex; flex-direction: column; min-height: 0; }
.taskbody { display: flex; flex-direction: column; flex: 1; min-height: 0; padding: 7px 11px 23px 6px; }
.carte { display: flex; align-items: center; gap: 10px; padding: 0 1px 0 2px; }
.carte .combo { flex: 1; height: 24px; padding: 0 5px 0 3px; }
.carte .caret, .selrow .caret { border-width: 4px; border-top-width: 5px; border-bottom: 0; }
.datatools { display: flex; gap: 9px; height: 68px; margin-top: 12px; padding: 10px 7px 0; border: 1px solid #2c3340; }
.datatools button { flex-direction: column; justify-content: flex-start; font-size: 13px; gap: 2px; }
.datatools button:disabled { color: #858a93; }
.viewmode { display: flex; align-items: center; gap: 10px; height: 35px; margin: 13px 0 7px; }
.viewmode button { width: 24px; height: 35px; }
.viewmode .on { background: var(--dark); }
.viewmode .bar { height: 32px; background: #858a93; }
.treebox { flex: 1; min-height: 0; padding: 5px 5px 7px; border: 1px solid #85888c; }
.tree { display: flex; flex-direction: column; height: 100%; overflow: hidden; background: #f5f5f5; color: #333; }
.node { display: flex; align-items: center; flex: none; height: 35px; padding-left: 13px; white-space: nowrap; overflow: hidden; }
.node.top { height: 33px; }
.node.child { padding-left: 68px; }
.node input { appearance: none; flex: none; width: 18px; height: 18px; margin: 0 6px 0 9px; border: 1px solid #777; border-radius: 2px; background: #fff; }
.node.child input { margin-left: 0; }
.node input:checked::after { content: ""; display: block; width: 9px; height: 5px; margin: 4px 0 0 3px; border-left: 2px solid #666; border-bottom: 2px solid #666; transform: rotate(-45deg); }
.chip { width: 60px; height: 20px; margin-right: 13px; background: #fff; }
.chip.lined { background: linear-gradient(#ccc, #ccc) center / 54px 1px no-repeat, #fff; }
.hscroll { display: flex; align-items: center; height: 21px; margin-top: auto; padding: 0 6px; background: #f0f0f0; border-top: 1px solid #fff; }
.hscroll svg:last-child { margin-left: auto; }
.thumb { height: 19px; background: #cdcdcd; }
.thumb.long { width: 122px; margin-left: 6px; }

.vtabs { display: flex; flex-direction: column; padding-top: 36px; }
.vtabs button { height: 160px; border: 1px solid var(--dark); background: var(--deep); color: var(--mute); }
.vtabs button.on { background: var(--panel); color: var(--text); }
.vtabs span { writing-mode: vertical-rl; transform: rotate(180deg); }
.left button { width: 27px; border-radius: 0 5px 5px 0; }
.left .on { border-left: 0; }
.right { padding-left: 5px; }
.right button { width: 28px; padding-left: 4px; border-radius: 5px 0 0 5px; }
.right .on { border-right: 0; }

/* Drawing area */
.viewport { display: grid; grid-template: 1fr 21px / 1fr 20px; min-height: 0; min-width: 0; margin: 4px 0 5px; }
.canvas { position: relative; overflow: hidden; background: #d8d8d8; border-right: 1px solid #fff; }
.drawing { position: absolute; inset: 0; width: 100%; height: 100%; }
.alt { font: 14px Roboto, sans-serif; fill: #111; }
.tag { font: 55px "Liberation Sans", Arial, sans-serif; fill: #f00; }
.docctl { position: absolute; top: 10px; right: 11px; display: flex; gap: 9px; }
.command { position: absolute; left: 280px; right: 260px; bottom: 1px; display: flex; align-items: center; height: 34px; padding-left: 4px; gap: 6px; border: 1px solid #555b68; border-radius: 4px; background: linear-gradient(90deg, #5f6470 72px, transparent 72px); }
.command button:nth-of-type(2) { margin-left: 7px; }
.prompt { display: flex; align-items: center; flex: 1; height: 32px; margin-left: -1px; padding: 0 6px 0 5px; gap: 2px; background: rgba(247, 247, 247, .75); }
.prompt input { flex: 1; border: 0; padding: 0 0 0 5px; background: none; font: italic 15px "DejaVu Sans Mono", monospace; }
.prompt input::placeholder { color: #8b8b8b; opacity: 1; }
.up { border: 5px solid transparent; border-bottom: 5px solid #888; border-top: 0; }
.vscroll { display: flex; flex-direction: column; align-items: center; justify-content: space-between; padding: 6px 0; background: #f0f0f0; }
.vthumb { width: 19px; height: 21px; margin-top: 5px; background: #cdcdcd; }
.hscroll.main { grid-column: 1 / 3; justify-content: space-between; padding: 0 27px 0 5px; }
.thumb.short { width: 21px; margin-left: 208px; }
.hscroll.main svg:last-child { margin-left: 0; }

/* Properties palette */
.selrow { display: flex; align-items: center; gap: 9px; margin: 15px 0 6px 6px; }
.selrow .combo { width: 122px; margin-right: 2px; padding: 0 5px 0 3px; gap: 0; }
.plists { flex: 1; min-height: 0; margin: 0 17px 25px 13px; overflow: hidden; }
.plists h4 { display: flex; align-items: center; justify-content: space-between; height: 27px; padding: 0 10px 0 9px; background: var(--deep); font-weight: 700; }
.plists h4 .caret { border-width: 5px; border-top-width: 5px; border-bottom: 0; }
.plists table { width: 174px; margin: 0 0 4px 21px; border-collapse: separate; border-spacing: 0; table-layout: fixed; }
.plists th, .plists td { height: 26px; padding: 0; border-bottom: 1px solid #2c3340; border-left: 1px solid #2c3340; text-align: left; font-weight: 400; white-space: nowrap; overflow: hidden; }
.plists th { width: 73px; padding-left: 8px; color: #d0d3d8; }
.plists td { padding-left: 3px; border-right: 1px solid #2c3340; }
.plists .ro { color: #8e949d; }
.plists td .swatch { display: inline-block; margin-right: 7px; vertical-align: middle; }
.plists td .line { display: inline-block; width: 43px; height: 1px; margin: 0 5px 0 1px; background: #e8e8e8; vertical-align: middle; }

/* Status bar */
.status { display: flex; justify-content: space-between; flex: none; height: 35px; }
.layouts { display: flex; height: 31px; padding-left: 5px; }
.layouts button { position: relative; width: 46px; }
.layouts button::after { content: ""; position: absolute; right: 0; top: 6px; width: 1px; height: 20px; background: #5b626d; transform: skewX(-22deg); }
.layouts .add { width: 50px; }
.layouts .current { width: 80px; margin-right: -6px; background: var(--panel); font-weight: 700; clip-path: polygon(12px 0, 100% 0, calc(100% - 12px) 100%, 0 100%); }
.layouts .current::after { display: none; }
.toggles { display: flex; align-items: center; gap: 3px; margin-right: -4px; padding-bottom: 1px; }
.bare { margin-right: 17px; }
.set { display: flex; height: 30px; background: var(--panel); }
.set button { justify-content: center; gap: 5px; border: 1px solid transparent; }
.blue { background: #5f8fc4; background-clip: padding-box; }
.set .blue { background-color: #5f8fc4; }
.set .blue.dull { background-color: #526f96; }
.w21 { width: 21px; }
.w28 { width: 28px; }
.w29 { width: 29px; }
.w31 { width: 31px; }
.w38 { width: 38px; }
.w50 { width: 50px; }
.w68 { width: 68px; }
.w119 { width: 119px; }
.w122 { width: 122px; }

/* Windows taskbar */
.taskbar { display: flex; flex: none; height: 50px; padding: 0 4px 2px; margin: 0 -4px; background: linear-gradient(90deg, #2e3d49, #33424f 65%, #434449 82%, #45464b); }
.start { width: 56px; padding-right: 4px; }
.search { display: flex; align-items: center; gap: 14px; width: 430px; padding-left: 15px; border: 1px solid #ccc; border-bottom: 0; background: #f2f2f2; color: #333; }
.search input { flex: 1; border: 0; padding: 0; background: none; font-size: 18px; }
.search input::placeholder { color: #333; opacity: 1; }
.apps { display: flex; }
.apps button { width: 62px; }
.running { position: relative; background: #5b666f; }
.running b { position: absolute; top: 10px; left: 26px; font-size: 15px; line-height: 20px; }
.running small { position: absolute; top: 30px; left: 23px; font-size: 7px; line-height: 10px; font-weight: 700; }
.tray { display: flex; align-items: center; gap: 12px; margin-left: auto; padding-right: 12px; }
.tray time { font-size: 14px; line-height: 23px; text-align: center; }
```
